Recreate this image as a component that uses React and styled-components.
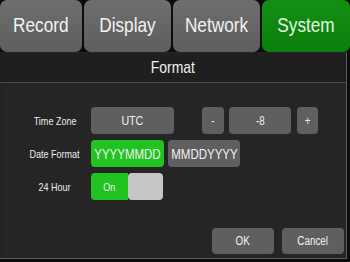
import React from "react";
import styled, { createGlobalStyle } from "styled-components";

const Global = createGlobalStyle`
  html, body { margin: 0; padding: 0; background: #0c0c0c; }
  body { font-family: "Liberation Sans", Arial, sans-serif; }
`;

const Screen = styled.div`
  width: 350px;
  height: 262px;
  background: #0c0c0c;
  overflow: hidden;
  display: flex;
  flex-direction: column;
`;

/* the device font is a narrow grotesque: Arial condensed horizontally */
const Txt = styled.span`
  display: inline-block;
  white-space: nowrap;
  transform: scaleX(0.82);
  transform-origin: center;
`;

const TabBar = styled.div`
  display: flex;
  gap: 2px;
  height: 52px;
  flex: none;
`;

const Tab = styled.div`
  width: ${(p) => p.$w}px;
  flex: none;
  display: flex;
  align-items: center;
  justify-content: center;
  border-radius: 7px;
  background: ${(p) =>
    p.$active
      ? "linear-gradient(#138f13, #0c7f0c)"
      : "linear-gradient(#6e6e6e, #5e5e5e)"};
  color: ${(p) => (p.$active ? "#e4f4e0" : "#f2f2f2")};
  font-size: 21px;
  padding-bottom: 2px;
  box-sizing: border-box;
`;

const Panel = styled.div`
  width: 347px;
  height: 207px;
  box-sizing: border-box;
  background: linear-gradient(90deg, #1d2328 0px, #252525 6px, #252525 100%);
  border-right: 1px solid #5c5c5c;
  border-bottom: 1px solid #5c5c5c;
  display: flex;
  flex-direction: column;
`;

const Header = styled.div`
  height: 30px;
  box-sizing: border-box;
  margin-top: 1px;
  background: #1f1f1f;
  border-bottom: 1px solid #4a4a4a;
  display: flex;
  align-items: center;
  justify-content: center;
  color: #f0f0f0;
  font-size: 17px;
`;

const Form = styled.div`
  display: flex;
  flex-direction: column;
  gap: 6px;
  padding-top: 24px;
`;

const Row = styled.div`
  display: flex;
  align-items: center;
  height: 27px;
`;

const Label = styled.div`
  width: 70px;
  margin-left: 20px;
  margin-right: 1px;
  text-align: center;
  color: #ececec;
  font-size: 11px;
  flex: none;
`;

const Controls = styled.div`
  display: flex;
  align-items: center;
  gap: ${(p) => p.$gap || 4}px;
  height: 100%;
`;

const Button = styled.div`
  width: ${(p) => p.$w}px;
  height: ${(p) => p.$h || 27}px;
  margin-left: ${(p) => p.$ml || 0}px;
  flex: none;
  box-sizing: border-box;
  display: flex;
  align-items: center;
  justify-content: center;
  border-radius: 4px;
  background: ${(p) => (p.$on ? "#20c320" : "#5f5f5f")};
  color: #f2f2f2;
  font-size: ${(p) => p.$fs || 12}px;
`;

const Toggle = styled.div`
  width: 72px;
  height: 27px;
  border-radius: 4px;
  overflow: hidden;
  display: flex;
  flex: none;
`;

const ToggleOn = styled.div`
  width: 37px;
  background: #20c320;
  color: #f0f0f0;
  font-size: 11px;
  display: flex;
  align-items: center;
  justify-content: center;
`;

const Knob = styled.div`
  flex: 1;
  background: #c6c6c6;
  border-radius: 4px 0 0 4px;
`;

const Footer = styled.div`
  display: flex;
  justify-content: flex-end;
  gap: 8px;
  padding-right: 2px;
  margin-top: 28px;
`;

export default function App() {
  return (
    <Screen>
      <Global />
      <TabBar>
        <Tab $w={82}><Txt>Record</Txt></Tab>
        <Tab $w={87}><Txt>Display</Txt></Tab>
        <Tab $w={87}><Txt>Network</Txt></Tab>
        <Tab $w={88} $active><Txt>System</Txt></Tab>
      </TabBar>
      <Panel>
        <Header><Txt>Format</Txt></Header>
        <Form>
          <Row>
            <Label><Txt>Time Zone</Txt></Label>
            <Controls $gap={5}>
              <Button $w={83} $fs={13}><Txt>UTC</Txt></Button>
              <Button $w={22} $ml={23}><Txt>-</Txt></Button>
              <Button $w={62}><Txt>-8</Txt></Button>
              <Button $w={21} $ml={1}><Txt>+</Txt></Button>
            </Controls>
          </Row>
          <Row>
            <Label><Txt>Date Format</Txt></Label>
            <Controls $gap={4}>
              <Button $w={73} $on $fs={14}><Txt>YYYYMMDD</Txt></Button>
              <Button $w={72} $fs={14}><Txt>MMDDYYYY</Txt></Button>
            </Controls>
          </Row>
          <Row>
            <Label><Txt>24 Hour</Txt></Label>
            <Toggle>
              <ToggleOn><Txt>On</Txt></ToggleOn>
              <Knob />
            </Toggle>
          </Row>
        </Form>
        <Footer>
          <Button $w={62} $h={26}><Txt>OK</Txt></Button>
          <Button $w={62} $h={26}><Txt>Cancel</Txt></Button>
        </Footer>
      </Panel>
    </Screen>
  );
}
